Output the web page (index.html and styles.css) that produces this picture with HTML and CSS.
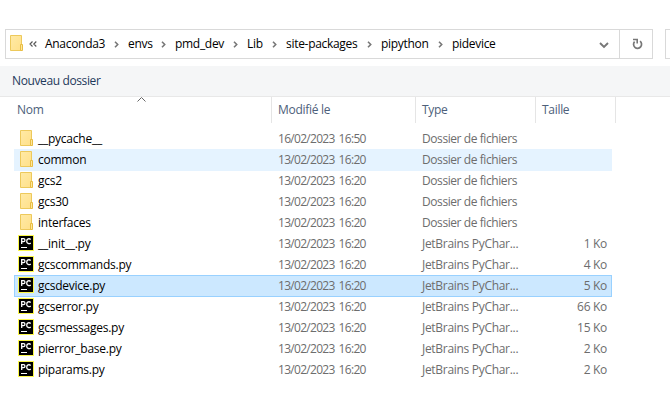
FILE: index.html
```
<!DOCTYPE html>
<html lang="fr">
<head>
<meta charset="utf-8">
<title>pidevice</title>
<link rel="stylesheet" href="styles.css">
</head>
<body>
<svg class="defs" width="0" height="0">
<defs>
<linearGradient id="paper" x1="0" y1="0" x2="1" y2="1"><stop offset="0" stop-color="#ffeaa6"/><stop offset="1" stop-color="#ffe08a"/></linearGradient>
<symbol id="folder" viewBox="0 0 14 17"><path d="M.5.5h11v15H.5z" fill="url(#paper)" stroke="#edc95b"/><path d="M10.500 9.500h2v6h-2z" fill="#ffe69a" stroke="#e8bd43"/></symbol>
<symbol id="chev" viewBox="0 0 5 7"><path d="M1 .8l2.700 2.700L1 6.200" fill="none" stroke="#777" stroke-width="1.600"/></symbol>
<symbol id="pc" viewBox="0 0 16 16"><path d="M0 0h16v16H0z" fill="#fcf84a"/><path d="M1 1h14v14H1z" fill="#000"/><path d="M3.700 9V3.700h1.800a1.400 1.400 0 0 1 0 2.900H3.700M12.700 4.400C11 3 8.700 4 8.700 6.200s2.300 3.100 4 1.700" fill="none" stroke="#fff" stroke-width="1.300"/><path d="M3 12h6v1H3z" fill="#fff"/></symbol>
</defs>
</svg>
<header class="location">
<nav class="address">
<svg class="folder"><use href="#folder"/></svg>
<svg class="back" viewBox="0 0 8 6"><path d="M3.500 .5L1 3l2.500 2.500M7.300 .5L4.800 3l2.500 2.500" fill="none" stroke="#555" stroke-width="1.150"/></svg>
<span class="crumb anaconda">Anaconda3</span><svg class="chev"><use href="#chev"/></svg>
<span class="crumb envs">envs</span><svg class="chev"><use href="#chev"/></svg>
<span class="crumb pmd">pmd_dev</span><svg class="chev"><use href="#chev"/></svg>
<span class="crumb lib">Lib</span><svg class="chev"><use href="#chev"/></svg>
<span class="crumb site">site-packages</span><svg class="chev"><use href="#chev"/></svg>
<span class="crumb pipython">pipython</span><svg class="chev"><use href="#chev"/></svg>
<span class="crumb pidevice">pidevice</span>
<svg class="drop" viewBox="0 0 10 7"><path d="M1 1l4 4 4-4" fill="none" stroke="#777" stroke-width="1.900"/></svg>
<span class="refresh"><svg viewBox="0 0 11 12"><path d="M8.100 3.200A4 4 0 1 1 2.600 3.600" fill="none" stroke="#777" stroke-width="1.700"/><path d="M1 1.500h4.200v4" fill="none" stroke="#777" stroke-width="1.600"/></svg></span>
</nav>
<div class="search"></div>
</header>
<div class="toolbar">Nouveau dossier</div>
<div class="head">
<span class="h-name">Nom<svg class="sort" viewBox="0 0 9 5"><path d="M.5 4.500l4-4 4 4" fill="none" stroke="#666"/></svg></span><span>Modifié le</span><span>Type</span><span>Taille</span>
</div>
<main class="list">
<div class="row"><svg class="folder"><use href="#folder"/></svg><span class="name">__pycache__</span><span class="date">16/02/2023 16:50</span><span class="type folder-type">Dossier de fichiers</span><span class="size"></span></div>
<div class="row hover"><svg class="folder"><use href="#folder"/></svg><span class="name">common</span><span class="date">13/02/2023 16:20</span><span class="type folder-type">Dossier de fichiers</span><span class="size"></span></div>
<div class="row"><svg class="folder"><use href="#folder"/></svg><span class="name">gcs2</span><span class="date">13/02/2023 16:20</span><span class="type folder-type">Dossier de fichiers</span><span class="size"></span></div>
<div class="row"><svg class="folder"><use href="#folder"/></svg><span class="name">gcs30</span><span class="date">13/02/2023 16:20</span><span class="type folder-type">Dossier de fichiers</span><span class="size"></span></div>
<div class="row"><svg class="folder"><use href="#folder"/></svg><span class="name">interfaces</span><span class="date">13/02/2023 16:20</span><span class="type folder-type">Dossier de fichiers</span><span class="size"></span></div>
<div class="row"><svg class="pc"><use href="#pc"/></svg><span class="name">__init__.py</span><span class="date">13/02/2023 16:20</span><span class="type">JetBrains PyChar...</span><span class="size">1 Ko</span></div>
<div class="row"><svg class="pc"><use href="#pc"/></svg><span class="name">gcscommands.py</span><span class="date">13/02/2023 16:20</span><span class="type">JetBrains PyChar...</span><span class="size">4 Ko</span></div>
<div class="row selected"><svg class="pc"><use href="#pc"/></svg><span class="name">gcsdevice.py</span><span class="date">13/02/2023 16:20</span><span class="type">JetBrains PyChar...</span><span class="size">5 Ko</span></div>
<div class="row"><svg class="pc"><use href="#pc"/></svg><span class="name">gcserror.py</span><span class="date">13/02/2023 16:20</span><span class="type">JetBrains PyChar...</span><span class="size">66 Ko</span></div>
<div class="row"><svg class="pc"><use href="#pc"/></svg><span class="name">gcsmessages.py</span><span class="date">13/02/2023 16:20</span><span class="type">JetBrains PyChar...</span><span class="size">15 Ko</span></div>
<div class="row"><svg class="pc"><use href="#pc"/></svg><span class="name">pierror_base.py</span><span class="date">13/02/2023 16:20</span><span class="type">JetBrains PyChar...</span><span class="size">2 Ko</span></div>
<div class="row"><svg class="pc"><use href="#pc"/></svg><span class="name">piparams.py</span><span class="date">13/02/2023 16:20</span><span class="type">JetBrains PyChar...</span><span class="size">2 Ko</span></div>
</main>
</body>
</html>
```
FILE: styles.css
```
* { box-sizing: border-box; }
body { margin: 0; width: 670px; height: 412px; overflow: hidden; background: #fff; color: #000; font: 12px/20px "Open Sans", "Noto Sans", sans-serif; letter-spacing: -0.3px; white-space: nowrap; }
svg { display: block; flex: none; }
.defs { position: absolute; }
.location { display: flex; gap: 12px; height: 66px; padding: 29px 0 7px 5px; }
.address { display: flex; align-items: center; flex: none; width: 648px; height: 30px; padding-left: 4px; border: 1px solid #d9d9d9; }
.search { flex: 1; height: 30px; border: 1px solid #d9d9d9; border-right: 0; }
.folder { width: 14px; height: 17px; }
.address .folder { margin-top: -1px; }
.back { width: 8px; height: 6px; margin: 0 8px 0 5px; }
.crumb { flex: none; }
.anaconda { width: 60px; }
.envs { width: 24px; }
.pmd { width: 49px; }
.lib { width: 16px; }
.site { width: 72px; }
.pipython { width: 48px; }
.pidevice { width: 46px; }
.chev { width: 5px; height: 7px; margin: 1px 9px 0; }
.drop { width: 10px; height: 7px; margin: 2px 10px 0 auto; }
.refresh { display: flex; align-items: center; justify-content: center; width: 33px; height: 28px; border-left: 1px solid #d9d9d9; padding-left: 2px; }
.refresh svg { width: 11px; height: 12px; }
.toolbar { height: 31px; padding: 5px 12px; background: #f5f6f7; border-bottom: 1px solid #e8e8e8; color: #1e395b; letter-spacing: -0.38px; }
.head { display: grid; grid-template-columns: 272px 144px 120px 80px; height: 26px; color: #4c607a; line-height: 26px; }
.head span { padding-left: 6px; border-right: 1px solid #e5e5e5; }
.head .h-name { position: relative; padding-left: 17px; }
.sort { position: absolute; left: 137px; top: 0; width: 9px; height: 5px; }
.list { padding: 5px 0 0 14px; }
.row { display: grid; grid-template: 20px / 24px 240px 144px 120px 64px; align-items: center; width: 598px; height: 22px; margin-bottom: -1px; border: 1px solid transparent; color: #6d6d6d; }
.row .folder { margin-left: 5px; margin-top: -1px; }
.pc { width: 16px; height: 16px; margin: -2px 0 0 3px; }
.name { margin-left: -1px; color: #000; letter-spacing: -0.25px; }
.date { margin-left: -1px; letter-spacing: -0.7px; word-spacing: 1.5px; }
.type { margin-left: -1px; }
.folder-type { letter-spacing: -0.42px; }
.size { text-align: right; }
.hover { background: #e5f3ff; }
.selected { background: #cce8ff; border-color: #99d1ff; }
```
